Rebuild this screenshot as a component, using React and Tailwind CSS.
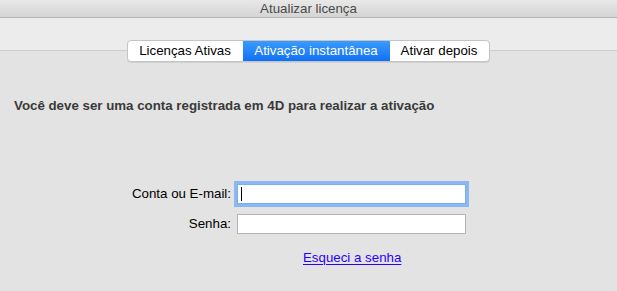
import React from 'react';

const tabs = [
    { label: 'Licenças Ativas', width: 'w-[115px]' },
    { label: 'Ativação instantânea', width: 'w-[147px]', active: true },
    { label: 'Ativar depois', width: 'w-[99px]' },
];

const App = () => {
    return (
        <div className="w-[617px] h-[291px] overflow-hidden bg-[#e3e3e3] text-[13.3px] text-[#222]" style={{ fontFamily: '"Liberation Sans", Arial, sans-serif' }}>
            {/* Title bar */}
            <div className="h-[18px] flex items-center justify-center bg-gradient-to-b from-[#e9e9e9] to-[#d4d4d4] border-b border-[#b5b5b5] text-[#4a4a4a]">
                Atualizar licença
            </div>

            {/* Toolbar area */}
            <div className="h-[33px] bg-[#ececec] border-b border-[#cdcdcd]" />

            {/* Segmented tabs */}
            <div className="flex justify-center -mt-[11px]">
                <div className="ml-[-1px] flex h-[22px] rounded-[4px] border border-[#c4c4c4] bg-white shadow-[0_1px_0_rgba(0,0,0,0.08)] overflow-hidden">
                    {tabs.map((tab) => (
                        <div
                            key={tab.label}
                            className={`${tab.width} flex items-center justify-center leading-none ${
                                tab.active ? 'bg-gradient-to-b from-[#3b9bfc] to-[#0f70f5] text-white' : 'text-black'
                            }`}
                        >
                            {tab.label}
                        </div>
                    ))}
                </div>
            </div>

            {/* Message */}
            <div className="mt-[36px] pl-[14px] font-bold text-[#3a3a3a] leading-[16px]">
                Você deve ser uma conta registrada em 4D para realizar a ativação
            </div>

            {/* Form */}
            <div className="mt-[70px] flex flex-col gap-[10px]">
                <div className="flex items-center">
                    <label className="w-[231px] text-right text-black">Conta ou E-mail:</label>
                    <div className="ml-[6px] w-[229px] h-[20px] bg-white border border-[#7aaef0] ring-[3px] ring-[#8ab8f2] flex items-center pl-[3px]">
                        <div className="w-[1px] h-[14px] bg-black" />
                    </div>
                </div>
                <div className="flex items-center">
                    <label className="w-[231px] text-right text-black">Senha:</label>
                    <div className="ml-[6px] w-[229px] h-[20px] bg-white border border-[#b4b4b4]" />
                </div>
            </div>

            <div className="mt-[14px] pl-[303px]">
                <a href="#" className="text-[#2a00ff] underline underline-offset-2">Esqueci a senha</a>
            </div>
        </div>
    );
};

export default App;
